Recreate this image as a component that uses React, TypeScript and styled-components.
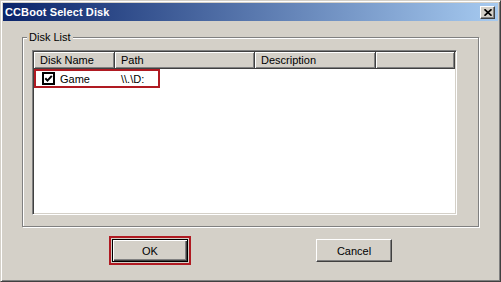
import styled, { createGlobalStyle } from "styled-components";

const GlobalStyle = createGlobalStyle`
  html, body {
    margin: 0;
    padding: 0;
    background: #d4d0c8;
  }
  body {
    font-family: "Liberation Sans", Arial, sans-serif;
    font-size: 11px;
    color: #000;
  }
`;

const Window = styled.div`
  width: 501px;
  height: 282px;
  box-sizing: border-box;
  background: #d4d0c8;
  border: 1px solid;
  border-color: #d4d0c8 #404040 #404040 #d4d0c8;
  box-shadow: inset 1px 1px #fff, inset -1px -1px #808080;
  padding: 2px;
  display: flex;
  flex-direction: column;
`;

const TitleBar = styled.div`
  height: 18px;
  flex-shrink: 0;
  background: linear-gradient(to right, #0a246a, #a6caf0);
  display: flex;
  align-items: center;
  justify-content: space-between;
  padding: 0 3px 0 2px;
`;

const Title = styled.span`
  color: #fff;
  font-weight: bold;
  font-size: 11px;
  letter-spacing: 0.1px;
`;

const CloseButton = styled.div`
  width: 15px;
  height: 13px;
  box-sizing: border-box;
  background: #d4d0c8;
  border: 1px solid;
  border-color: #fff #404040 #404040 #fff;
  box-shadow: inset -1px -1px #808080;
  display: flex;
  align-items: center;
  justify-content: center;
`;

const Body = styled.div`
  display: flex;
  flex-direction: column;
  padding: 16px 19px 0 19px;
`;

const GroupBox = styled.div`
  position: relative;
  width: 457px;
  height: 190px;
  box-sizing: border-box;
  border: 1px solid #808080;
  box-shadow: 1px 1px 0 #fff, inset 1px 1px 0 #fff;
  padding: 12px 21px 11px 9px;
`;

const Legend = styled.span`
  position: absolute;
  top: -7px;
  left: 4px;
  padding: 0 2px;
  line-height: 13px;
  background: #d4d0c8;
`;

const ListView = styled.div`
  width: 425px;
  height: 165px;
  box-sizing: border-box;
  background: #fff;
  border: 1px solid;
  border-color: #808080 #fff #fff #808080;
  box-shadow: inset 1px 1px #404040, inset -1px -1px #d4d0c8;
  padding: 1px;
  overflow: hidden;
`;

const Header = styled.div`
  display: flex;
  height: 17px;
`;

const HeaderCell = styled.div<{ $width?: number }>`
  ${(p) => (p.$width ? `width: ${p.$width}px; flex-shrink: 0;` : "flex: 1;")}
  box-sizing: border-box;
  background: #d4d0c8;
  border-right: 1px solid #404040;
  border-bottom: 1px solid #404040;
  box-shadow: inset 1px 1px #fff, inset -1px -1px #808080;
  padding-left: 6px;
  line-height: 16px;
  white-space: nowrap;
`;

const Row = styled.div`
  position: relative;
  display: flex;
  align-items: center;
  height: 19px;
`;

const Cell = styled.div<{ $width: number; $pad: number }>`
  width: ${(p) => p.$width}px;
  flex-shrink: 0;
  box-sizing: border-box;
  padding-left: ${(p) => p.$pad}px;
  display: flex;
  align-items: center;
  gap: 5px;
  white-space: nowrap;
`;

const RowHighlight = styled.div`
  position: absolute;
  left: 0;
  top: 0;
  width: 126px;
  height: 19px;
  box-sizing: border-box;
  border: 2px solid #b01a22;
  pointer-events: none;
`;

const ButtonRow = styled.div`
  display: flex;
  justify-content: center;
  align-items: center;
  gap: 125px;
  margin-top: 9px;
`;

const ButtonHighlight = styled.div`
  border: 2px solid #b01a22;
  padding: 1px;
  line-height: 0;
`;

const Button = styled.button<{ $default?: boolean }>`
  width: 76px;
  height: 23px;
  box-sizing: border-box;
  background: #d4d0c8;
  font-family: "Liberation Sans", Arial, sans-serif;
  font-size: 11px;
  color: #000;
  padding: 0;
  margin: 0;
  border: 1px solid;
  border-color: ${(p) => (p.$default ? "#000" : "#fff #404040 #404040 #fff")};
  box-shadow: ${(p) =>
    p.$default
      ? "inset 1px 1px #fff, inset -1px -1px #404040, inset -2px -2px #808080"
      : "inset -1px -1px #808080"};
`;

function CloseIcon() {
  return (
    <svg width="8" height="7" viewBox="0 0 8 7">
      <path d="M0.5 0.3 L7.5 6.7 M7.5 0.3 L0.5 6.7" stroke="#000" strokeWidth="1.7" />
    </svg>
  );
}

function CheckIcon() {
  return (
    <svg width="13" height="13" viewBox="0 0 13 13">
      <rect x="1" y="1" width="11" height="11" fill="#fff" stroke="#000" strokeWidth="2" />
      <path d="M3.3 6.3 L5.5 8.6 L9.8 3.8" fill="none" stroke="#000" strokeWidth="2" />
    </svg>
  );
}

export default function App() {
  return (
    <>
      <GlobalStyle />
      <Window>
        <TitleBar>
          <Title>CCBoot Select Disk</Title>
          <CloseButton>
            <CloseIcon />
          </CloseButton>
        </TitleBar>
        <Body>
          <GroupBox>
            <Legend>Disk List</Legend>
            <ListView>
              <Header>
                <HeaderCell $width={81}>Disk Name</HeaderCell>
                <HeaderCell $width={140}>Path</HeaderCell>
                <HeaderCell $width={121}>Description</HeaderCell>
                <HeaderCell />
              </Header>
              <Row>
                <Cell $width={81} $pad={8}>
                  <CheckIcon />
                  <span>Game</span>
                </Cell>
                <Cell $width={140} $pad={6}>
                  \\.\D:
                </Cell>
                <RowHighlight />
              </Row>
            </ListView>
          </GroupBox>
          <ButtonRow>
            <ButtonHighlight>
              <Button $default>OK</Button>
            </ButtonHighlight>
            <Button>Cancel</Button>
          </ButtonRow>
        </Body>
      </Window>
    </>
  );
}
